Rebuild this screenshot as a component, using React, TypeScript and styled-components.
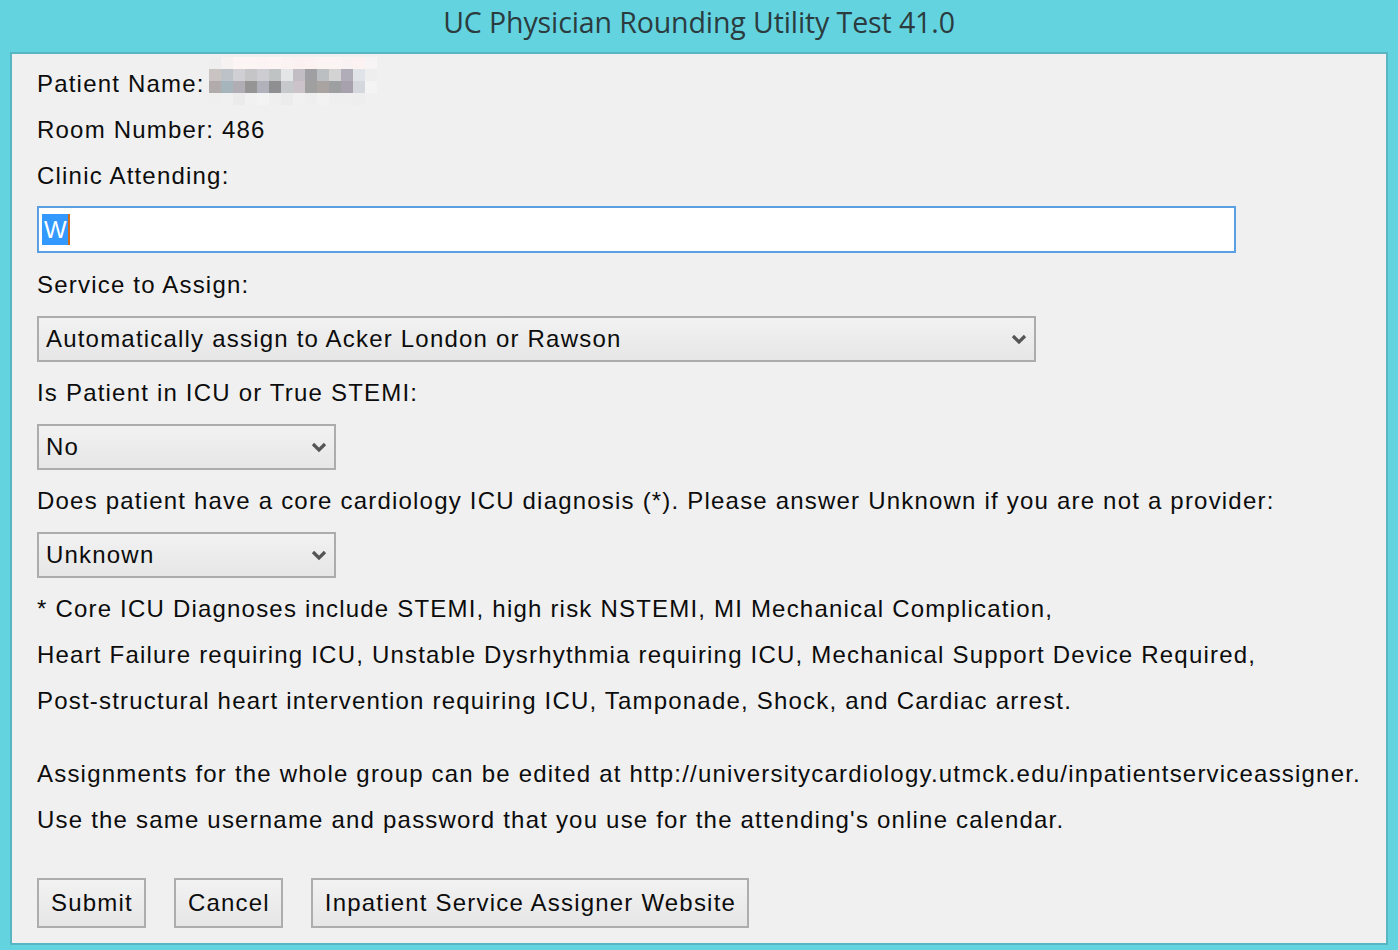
import React from "react";
import styled, { createGlobalStyle } from "styled-components";

const Global = createGlobalStyle`
  html, body { margin: 0; padding: 0; background: #63d3e0; }
  body { width: 1398px; height: 950px; overflow: hidden; }
`;

const Window = styled.div`
  width: 1398px;
  height: 950px;
  background: #63d3e0;
  display: flex;
  flex-direction: column;
  padding: 0 10px 5px 10px;
  box-sizing: border-box;
`;

const TitleBar = styled.div`
  height: 52px;
  display: flex;
  align-items: center;
  justify-content: center;
  font-family: "Open Sans", "Noto Sans", sans-serif;
  font-size: 28.5px;
  color: #2b3b3e;
  letter-spacing: -0.1px;
  padding-bottom: 8px;
  box-sizing: border-box;
`;

const Panel = styled.div`
  flex: 1;
  background: #f0f0f0;
  border: 2px solid #57b6c2;
  padding: 7px 0 0 25px;
  box-sizing: border-box;
  font-family: "Liberation Sans", Arial, sans-serif;
  font-size: 24px;
  color: #0c0c0c;
  letter-spacing: 1.2px;
`;

const Label = styled.div<{ $gapTop?: number }>`
  height: 46px;
  line-height: 46px;
  white-space: nowrap;
  margin-top: ${(p) => p.$gapTop ?? 0}px;
  display: flex;
  align-items: center;
`;

const TextInput = styled.div`
  width: 1199px;
  height: 47px;
  box-sizing: border-box;
  border: 2px solid #5b9fe3;
  background: #fff;
  margin: 7px 0 9px 0;
  display: flex;
  align-items: center;
  padding-left: 3px;
`;

const Selected = styled.span`
  background: #3399ff;
  color: #fff;
  height: 31px;
  line-height: 31px;
  padding: 0 1px 0 2px;
  letter-spacing: 0;
  border-right: 2px solid #d06a1a;
`;

const Select = styled.div<{ $w: number; $mt: number; $mb: number }>`
  width: ${(p) => p.$w}px;
  height: 46px;
  box-sizing: border-box;
  border: 2px solid #acacac;
  background: linear-gradient(#f2f2f2, #e6e6e6);
  margin: ${(p) => p.$mt}px 0 ${(p) => p.$mb}px 0;
  display: flex;
  align-items: center;
  justify-content: space-between;
  padding: 0 7px 0 7px;
`;

const Chevron = () => (
  <svg width="16" height="12" viewBox="0 0 16 12">
    <polyline points="2,3 8,9 14,3" fill="none" stroke="#555" strokeWidth="3.2" />
  </svg>
);

const Blur = styled.svg`
  margin-left: 4px;
  margin-top: -6px;
`;

const ButtonRow = styled.div`
  display: flex;
  gap: 28px;
  margin-top: 35px;
`;

const Button = styled.div`
  height: 50px;
  box-sizing: border-box;
  border: 2px solid #adadad;
  background: linear-gradient(#f2f2f2, #e6e6e6);
  display: flex;
  align-items: center;
  padding: 0 11px 0 12px;
  white-space: nowrap;
`;

const blurCells: string[][] = [
  ["#eeeeee", "#f7f2f2", "#fdf4f4", "#fcf5f4", "#fcf4f4", "#fcf5f4", "#fbf2f2", "#fbf1f1", "#fbf2f1", "#fcf3f3", "#fbf4f3", "#f8f2f2", "#fcf2f1", "#f6f4f4"],
  ["#c9c3c2", "#bcc2c8", "#d0d0d4", "#c5c4c6", "#cdccd0", "#c0c3c4", "#e3e5e6", "#c2bcc4", "#a0a0a2", "#bbbfc2", "#d3d3d3", "#b1adb8", "#e0e4e8", "#eeeeee"],
  ["#b2abab", "#a6b4bc", "#b1adb5", "#959595", "#b1b1bb", "#8f8e90", "#c6c9cc", "#cbc3c8", "#a0a0a0", "#a9a3a2", "#9e9fa0", "#a7a1ae", "#d4d7dc", "#f4f4f4"],
  ["#efefef", "#f0f0f0", "#ebebeb", "#f1f1f1", "#f3f3f3", "#efefef", "#ececec", "#f1f1f1", "#efefef", "#f2f2f2", "#efefef", "#efefef", "#eeeeee", "#f0f0f0"],
];

const BlurredName = () => (
  <Blur width="168" height="48" viewBox="0 0 168 48">
    {blurCells.map((row, r) =>
      row.map((c, i) => (
        <rect key={`${r}-${i}`} x={i * 12} y={r * 12} width="12" height="12" fill={c} />
      ))
    )}
  </Blur>
);

export default function App() {
  return (
    <>
      <Global />
      <Window>
        <TitleBar>UC Physician Rounding Utility Test 41.0</TitleBar>
        <Panel>
          <Label>
            Patient Name:
            <BlurredName />
          </Label>
          <Label>Room Number: 486</Label>
          <Label>Clinic Attending:</Label>
          <TextInput>
            <Selected>W</Selected>
          </TextInput>
          <Label>Service to Assign:</Label>
          <Select $w={999} $mt={8} $mb={8}>
            <span>Automatically assign to Acker London or Rawson</span>
            <Chevron />
          </Select>
          <Label>Is Patient in ICU or True STEMI:</Label>
          <Select $w={299} $mt={8} $mb={8}>
            <span>No</span>
            <Chevron />
          </Select>
          <Label>
            Does patient have a core cardiology ICU diagnosis (*). Please answer Unknown if you are not a provider:
          </Label>
          <Select $w={299} $mt={8} $mb={8}>
            <span>Unknown</span>
            <Chevron />
          </Select>
          <Label>* Core ICU Diagnoses include STEMI, high risk NSTEMI, MI Mechanical Complication,</Label>
          <Label>
            Heart Failure requiring ICU, Unstable Dysrhythmia requiring ICU, Mechanical Support Device Required,
          </Label>
          <Label>Post-structural heart intervention requiring ICU, Tamponade, Shock, and Cardiac arrest.</Label>
          <Label $gapTop={27}>
            Assignments for the whole group can be edited at http://universitycardiology.utmck.edu/inpatientserviceassigner.
          </Label>
          <Label>Use the same username and password that you use for the attending's online calendar.</Label>
          <ButtonRow>
            <Button>Submit</Button>
            <Button>Cancel</Button>
            <Button>Inpatient Service Assigner Website</Button>
          </ButtonRow>
        </Panel>
      </Window>
    </>
  );
}
